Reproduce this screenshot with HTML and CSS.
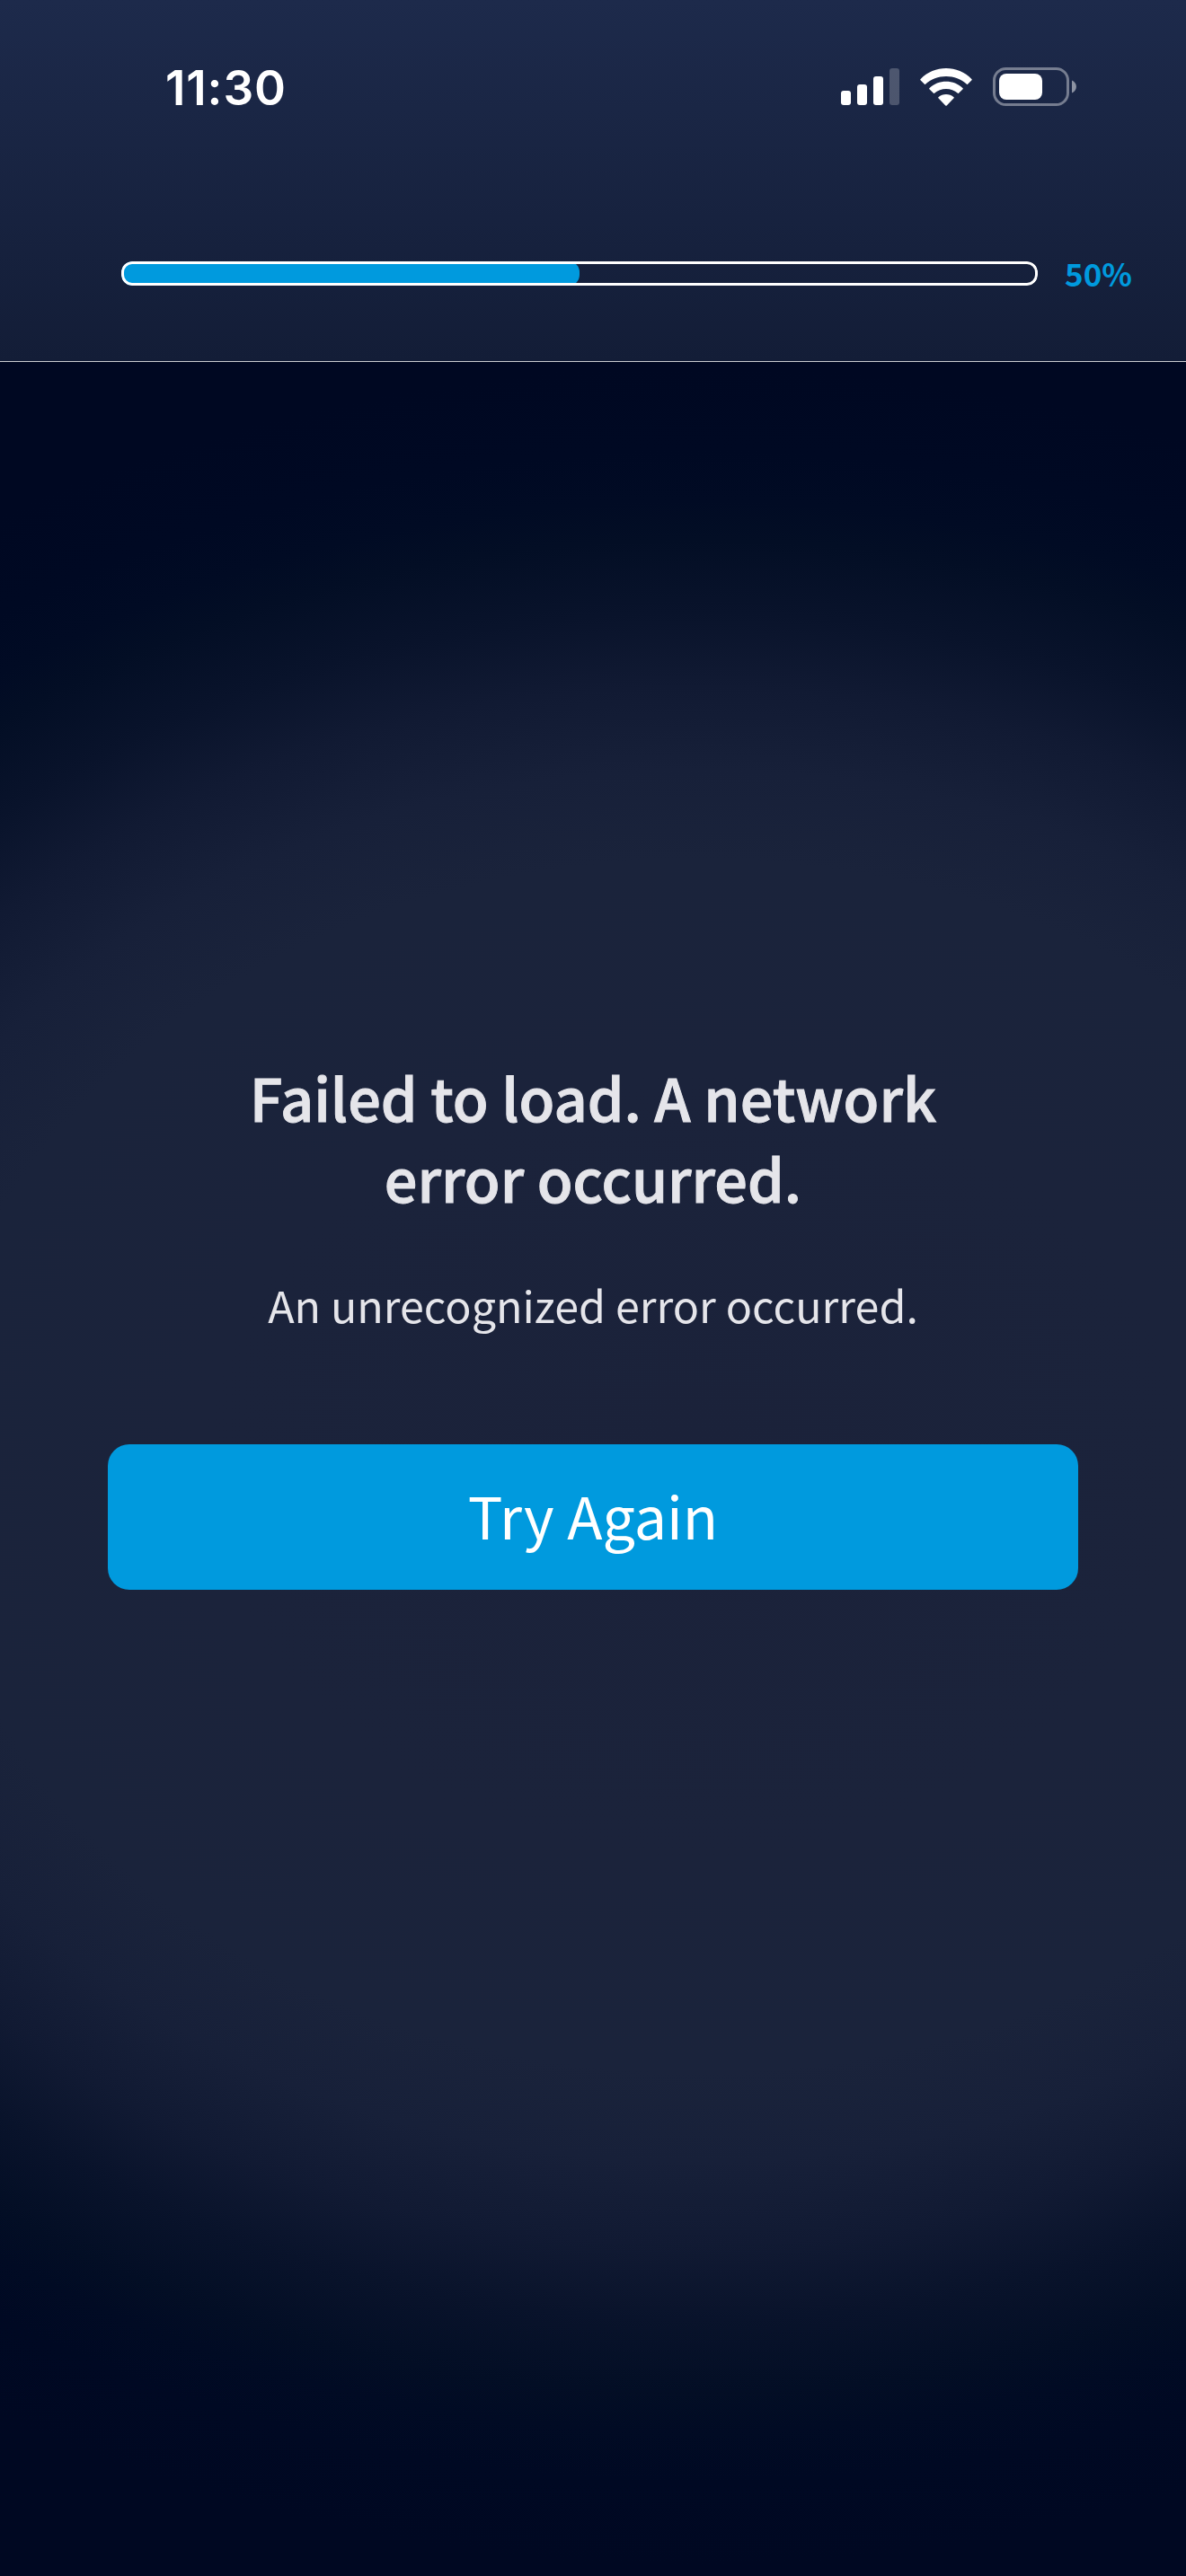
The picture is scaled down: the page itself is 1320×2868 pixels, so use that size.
FILE: index.html
```html
<!DOCTYPE html>
<html lang="en">
<head>
    <meta charset="UTF-8">
    <meta name="viewport" content="width=device-width, initial-scale=1.0">
    <title>Failed to load</title>

    <link rel="stylesheet" href="styles.css">
</head>
<body>

    <header class="header">
        <div class="status-bar">
            <span class="time">11:30</span>
            <div class="status-icons">
                <svg class="signal" width="65" height="41" viewBox="0 0 65 41" fill="#fff">
                    <rect x="0" y="25" width="11" height="16" rx="3"/>
                    <rect x="18" y="18" width="11" height="23" rx="3"/>
                    <rect x="36" y="9" width="11" height="32" rx="3"/>
                    <rect x="54" y="0" width="11" height="41" rx="3" opacity="0.22"/>
                </svg>
                <svg class="wifi" width="58" height="42" viewBox="0 0 58 42" fill="#fff">
                    <path d="M0.4 12.2Q0 12.7 0.5 13.2L5 17.8Q5.5 18.3 6 17.8C18 6 40 6 52 17.8Q52.5 18.3 53 17.8L57.5 13.2Q58 12.7 57.6 12.2C42 -4 16 -4 0.4 12.2Z"/>
                    <path d="M10.3 22.2Q9.9 22.7 10.4 23.2L15 27.8Q15.5 28.3 16 27.8C23 21.3 35 21.3 42 27.8Q42.5 28.3 43 27.8L47.6 23.2Q48.1 22.7 47.7 22.2C37.5 12.3 20.5 12.3 10.3 22.2Z"/>
                    <path d="M20.4 32.2Q19.9 32.7 20.4 33.2L28.3 41.4Q29 42.1 29.7 41.4L37.6 33.2Q38.1 32.7 37.6 32.2C32.8 27.9 25.2 27.9 20.4 32.2Z"/>
                </svg>
                <svg class="battery" width="93" height="43" viewBox="0 0 93 43">
                    <rect x="1.5" y="1.5" width="82" height="40" rx="13" fill="none" stroke="#fff" stroke-width="3" opacity="0.4"/>
                    <rect x="7" y="7" width="48" height="29" rx="8" fill="#fff"/>
                    <path d="M88 14.5C94.5 17 94.5 26 88 28.5Z" fill="#fff" opacity="0.5"/>
                </svg>
            </div>
        </div>
        <div class="progress">
            <div class="progress-bar">
                <div class="progress-fill" style="width: 50%"></div>
            </div>
            <span class="progress-label">50%</span>
        </div>
    </header>

    <main class="content">
        <h1>Failed to load. A network<br>error occurred.</h1>
        <p class="message">An unrecognized error occurred.</p>
        <button type="button" class="retry">Try Again</button>
    </main>

</body>
</html>
```
FILE: styles.css
```css
* {
    box-sizing: border-box;
}
body {
    margin: 0;
    height: 2868px;
    overflow: hidden;
    display: flex;
    flex-direction: column;
    background: radial-gradient(ellipse 1575px 1250px at 775px 1632px, #1b223a 0%, #1b233b 35%, #1a233b 54%, #172039 62%, #111a33 69.4%, #09132b 76%, #030e25 82.5%, #010b24 86%, #000923 90.5%, #000822 98%);
    color: #e5e5ea;
    font-family: 'Noto Sans CJK SC', 'Noto Sans', sans-serif;
}
.header {
    height: 403px;
    border-bottom: 1px solid #c9cbd0;
    background: linear-gradient(to bottom, #1d2a4b, #131d37);
}
.status-bar {
    display: flex;
    justify-content: space-between;
    align-items: center;
    height: 193px;
    padding: 0 122px 0 184px;
}
.time {
    padding-top: 3px;
    color: #fff;
    font-family: Inter, sans-serif;
    font-size: 53px;
    font-weight: 600;
    letter-spacing: 0.9px;
}
.status-icons {
    display: flex;
    align-items: center;
    gap: 23px;
}
.progress {
    display: flex;
    align-items: center;
    height: 27px;
    margin-top: 98px;
    padding-left: 135px;
    gap: 30px;
}
.progress-bar {
    position: relative;
    width: 1020px;
    height: 27px;
    border-radius: 12px;
    overflow: hidden;
}
/* outline sits on top of the fill */
.progress-bar::after {
    content: "";
    position: absolute;
    inset: 0;
    border: 3px solid #fff;
    border-radius: 12px;
}
.progress-fill {
    height: 27px;
    border-radius: 12px;
    background: #009ade;
}
.progress-label {
    padding-bottom: 3px;
    color: #009ade;
    font-size: 35px;
    font-weight: 700;
    line-height: 27px;
}
.content {
    display: flex;
    flex-direction: column;
    align-items: center;
    padding: 773px 120px 0;
}
h1 {
    margin: 0;
    font-size: 64.8px;
    font-weight: 500;
    line-height: 90px;
    text-align: center;
    -webkit-text-stroke: 1px #e5e5ea;
}
.message {
    margin: 62px 0 0;
    font-size: 48.4px;
    line-height: 68px;
}
.retry {
    width: 100%;
    height: 162px;
    margin-top: 122px;
    padding: 0 0 6px;
    border: 0;
    border-radius: 24px;
    background: #009ade;
    color: #fff;
    font-family: inherit;
    font-size: 64.6px;
    line-height: 90px;
}
```
